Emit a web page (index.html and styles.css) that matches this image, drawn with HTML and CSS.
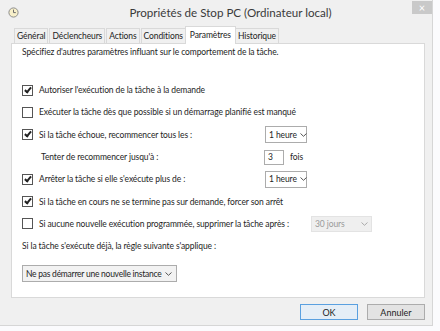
FILE: index.html
```html
<!DOCTYPE html>
<html lang="fr">
<head>
    <meta charset="UTF-8">
    <title>Propriétés de Stop PC (Ordinateur local)</title>
    <link rel="stylesheet" href="styles.css">
</head>
<body>
    <div class="window">
        <div class="titlebar">
            <svg class="app-icon" width="11" height="11" viewBox="0 0 11 11">
                <circle cx="5.5" cy="5.5" r="4.6" fill="#f7efc9" stroke="#8d8d8d" stroke-width="1"/>
                <path d="M5.5 2.6V5.6H7.8" fill="none" stroke="#6d6d6d" stroke-width="1"/>
            </svg>
            <span class="title">Propriétés de Stop PC (Ordinateur local)</span>
            <span class="close">×</span>
        </div>

        <div class="content">
            <div class="tabs">
                <span class="tab">Général</span>
                <span class="tab">Déclencheurs</span>
                <span class="tab">Actions</span>
                <span class="tab">Conditions</span>
                <span class="tab tab-active">Paramètres</span>
                <span class="tab">Historique</span>
            </div>

            <div class="panel">
                <p class="intro">Spécifiez d'autres paramètres influant sur le comportement de la tâche.</p>

                <div class="row first">
                    <span class="check on"></span>
                    <span class="label">Autoriser l'exécution de la tâche à la demande</span>
                </div>
                <div class="row">
                    <span class="check"></span>
                    <span class="label">Exécuter la tâche dès que possible si un démarrage planifié est manqué</span>
                </div>
                <div class="row">
                    <span class="check on"></span>
                    <span class="label label-fixed">Si la tâche échoue, recommencer tous les :</span>
                    <span class="select small">1 heure <svg class="arrow" width="7" height="4" viewBox="0 0 7 4"><path d="M0.5 0.5L3.5 3.3L6.5 0.5" fill="none" stroke="currentColor"/></svg></span>
                </div>
                <div class="row indent">
                    <span class="label label-fixed">Tenter de recommencer jusqu'à :</span>
                    <span class="field">3</span>
                    <span class="unit">fois</span>
                </div>
                <div class="row">
                    <span class="check on"></span>
                    <span class="label label-fixed">Arrêter la tâche si elle s'exécute plus de :</span>
                    <span class="select small">1 heure <svg class="arrow" width="7" height="4" viewBox="0 0 7 4"><path d="M0.5 0.5L3.5 3.3L6.5 0.5" fill="none" stroke="currentColor"/></svg></span>
                </div>
                <div class="row">
                    <span class="check on"></span>
                    <span class="label">Si la tâche en cours ne se termine pas sur demande, forcer son arrêt</span>
                </div>
                <div class="row">
                    <span class="check"></span>
                    <span class="label label-wide">Si aucune nouvelle exécution programmée, supprimer la tâche après :</span>
                    <span class="select disabled">30 jours <svg class="arrow" width="7" height="4" viewBox="0 0 7 4"><path d="M0.5 0.5L3.5 3.3L6.5 0.5" fill="none" stroke="currentColor"/></svg></span>
                </div>
                <div class="row plain">
                    <span class="label">Si la tâche s'exécute déjà, la règle suivante s'applique :</span>
                </div>
                <span class="select wide">Ne pas démarrer une nouvelle instance <svg class="arrow" width="7" height="4" viewBox="0 0 7 4"><path d="M0.5 0.5L3.5 3.3L6.5 0.5" fill="none" stroke="currentColor"/></svg></span>
            </div>

            <div class="actions">
                <button class="button button-default">OK</button>
                <button class="button">Annuler</button>
            </div>
        </div>
    </div>
</body>
</html>
```

FILE: styles.css
```css
body {
    margin: 0;
    background-color: #fbfbfd;
    font-family: Lato, "Noto Sans", sans-serif;
    font-size: 8.5px;
    letter-spacing: -0.1px;
    color: #1e1e1e;
    white-space: nowrap;
}

.window {
    width: 433px;
    height: 326px;
    background-color: #f0f0f0;
    border-right: 1px solid #d6d6d6;
    border-bottom: 1px solid #d6d6d6;
    box-sizing: border-box;
}

.titlebar {
    height: 24px;
    display: flex;
    align-items: center;
}

.app-icon {
    margin-left: 8px;
}

.title {
    flex: 1;
    text-align: center;
    font-size: 11.6px;
    letter-spacing: 0;
    color: #3a3a3a;
    margin-left: 30px;
}

.close {
    align-self: flex-start;
    width: 20px;
    height: 13px;
    margin-top: 1px;
    background-color: #c9c9c9;
    color: #ffffff;
    font-size: 11px;
    line-height: 13px;
    text-align: center;
}

.content {
    padding: 2px 7px 0 11px;
}

.tabs {
    display: flex;
    align-items: flex-end;
    height: 17px;
    padding-left: 3px;
    font-size: 8.5px;
}

.tab {
    height: 14px;
    line-height: 14px;
    padding: 0 2px;
    border: 1px solid #d9d9d9;
    border-bottom: none;
    margin-right: 1px;
    background-color: #f0f0f0;
    color: #222;
}

.tab-active {
    height: 17px;
    line-height: 16px;
    padding: 0 4px;
    margin: 0 -1px 0 -2px;
    background-color: #ffffff;
    position: relative;
    top: 1px;
    z-index: 1;
}

.panel {
    background-color: #ffffff;
    border: 1px solid #d9d9d9;
    height: 252px;
    padding: 1px 10px 0;
}

.intro {
    margin: 0;
    line-height: 14px;
}

.row {
    display: flex;
    align-items: center;
    height: 22.3px;
}

.row.first {
    margin-top: 20px;
}

.row.indent {
    padding-left: 19px;
}

.check {
    width: 9px;
    height: 9px;
    border: 1px solid #555;
    background-color: #fff;
    margin-right: 6px;
    position: relative;
    flex-shrink: 0;
}

.check.on::after {
    content: "";
    position: absolute;
    left: 3px;
    top: 0px;
    width: 2px;
    height: 5px;
    border: solid #222;
    border-width: 0 2px 2px 0;
    transform: rotate(40deg);
}

.label-fixed {
    width: 226px;
}

.indent .label-fixed {
    width: 223px;
}

.label-wide {
    width: 272px;
}

.select {
    display: inline-flex;
    align-items: center;
    justify-content: space-between;
    height: 15px;
    padding: 0 3px;
    border: 1px solid #acacac;
    background-color: #fff;
    box-sizing: border-box;
    color: #1e1e1e;
}

.select.small {
    width: 42px;
    height: 17px;
}

.select.disabled {
    width: 61px;
    height: 16px;
    border-color: #e3e3e3;
    background-color: #efefef;
    color: #9a9a9a;
}

.select.wide {
    width: 155px;
    height: 17px;
    margin-top: 8px;
    padding-right: 6px;
    letter-spacing: -0.25px;
    background-color: #f2f2f2;
}

.arrow {
    flex-shrink: 0;
    margin-left: 3px;
    color: #555;
}

.disabled .arrow {
    color: #aaa;
}

.field {
    width: 20px;
    height: 15px;
    border: 1px solid #acacac;
    box-sizing: border-box;
    padding-left: 3px;
    line-height: 13px;
}

.unit {
    margin-left: 6px;
}

.actions {
    display: flex;
    justify-content: flex-end;
    gap: 9px;
    padding: 6px 0 0;
}

.button {
    width: 58px;
    height: 16px;
    font-family: inherit;
    font-size: 9px;
    padding: 0;
    background-color: #e3e3e3;
    border: 1px solid #acacac;
    color: #1e1e1e;
}

.button-default {
    border-color: #5aa0e0;
    background-color: #e5eef7;
}
```
